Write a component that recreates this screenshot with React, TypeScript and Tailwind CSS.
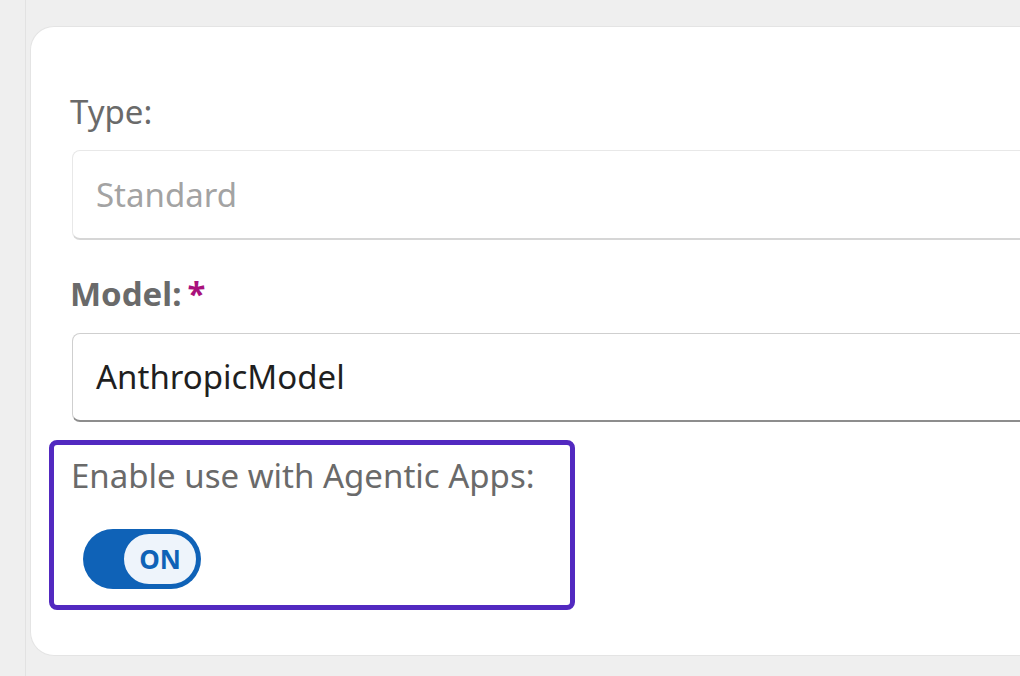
import React from "react";

export default function App() {
  return (
    <div
      className="w-[1020px] h-[676px] bg-[#efefef] flex overflow-hidden"
      style={{ fontFamily: '"Noto Sans", "Open Sans", sans-serif' }}
    >
      <div className="w-[26px] shrink-0 border-r border-[#e2e2e2]" />
      <div className="pl-[4px] pt-[26px] shrink-0">
        <div className="w-[1100px] h-[630px] bg-white rounded-l-[24px] border border-r-0 border-[#e4e4e4] pl-[39px] pt-[65px]">
          <div className="text-[33px] leading-[40px] text-[#6a6a6a]">Type:</div>
          <div className="mt-[18px] ml-[2px] h-[90px] rounded-[8px] border border-[#e8e8e8] border-b-[2px] border-b-[#d6d6d6] flex items-center pl-[23px] text-[33px] text-[#a3a3a3]">
            Standard
          </div>
          <div className="mt-[34px] text-[33px] leading-[40px] font-bold text-[#6a6a6a] flex">
            Model:<span className="ml-[6px] text-[#a9117c]">*</span>
          </div>
          <div className="mt-[19px] ml-[2px] h-[89px] rounded-[8px] border border-[#cfcfcf] border-b-[2px] border-b-[#8d8d8d] flex items-center pl-[23px] text-[33px] text-[#1f1f1f]">
            AnthropicModel
          </div>
          <div className="mt-[18px] -ml-[21px] w-[526px] h-[170px] rounded-[8px] border-[5px] border-[#5229c0] pl-[17px] pt-[11px]">
            <div className="text-[33px] leading-[40px] text-[#6a6a6a]">Enable use with Agentic Apps:</div>
            <div className="mt-[33px] ml-[12px] w-[118px] h-[60px] rounded-full bg-[#0f62b7] flex items-center justify-end pr-[3px]">
              <div className="w-[76px] h-[54px] rounded-full bg-[#eef4fb] border-[2px] border-[#0f62b7] flex items-center justify-center text-[26px] font-bold text-[#0f62b7]">
                ON
              </div>
            </div>
          </div>
        </div>
      </div>
    </div>
  );
}
